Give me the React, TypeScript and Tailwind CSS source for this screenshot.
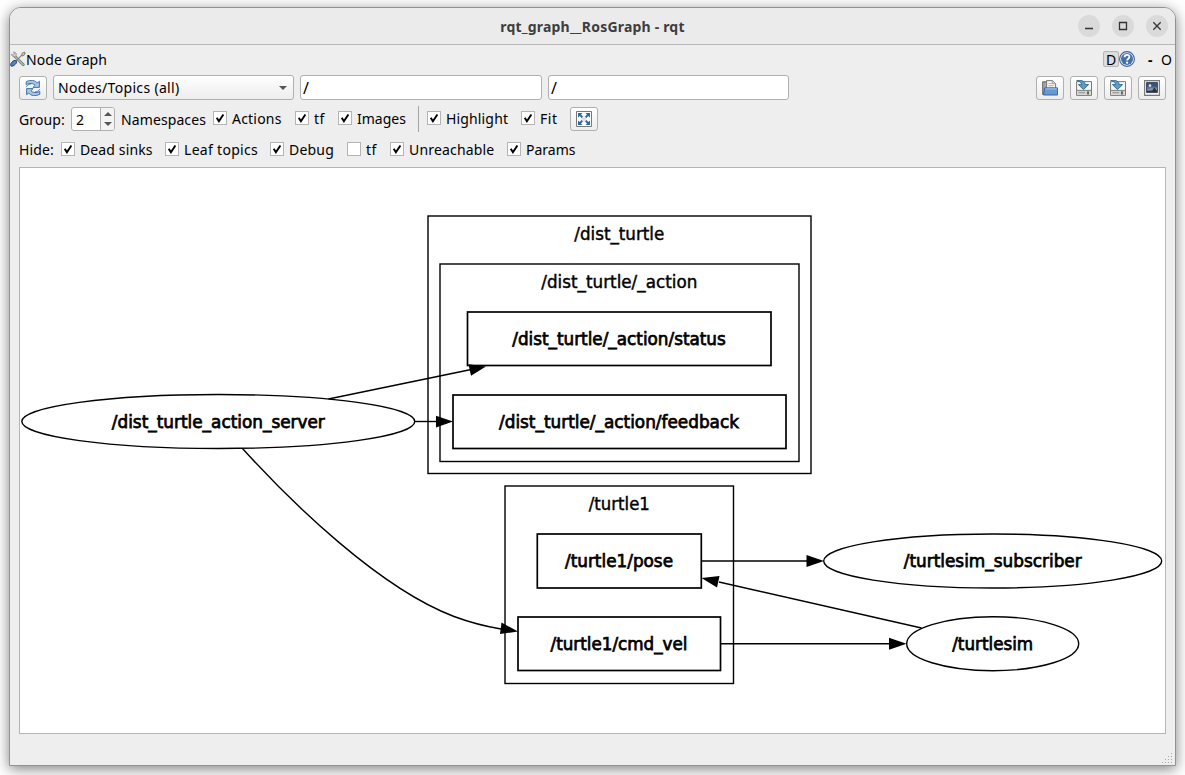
import type { ReactNode } from "react";
import clsx from "clsx";

type CheckOption = { label: string; width: string; text: string; checked?: boolean };

const NAMESPACE_OPTIONS: CheckOption[] = [
  { label: "Actions", width: "w-[82px]", text: "tracking-[0.2px]", checked: true },
  { label: "tf", width: "w-[43px]", text: "tracking-[0.5px]", checked: true },
  { label: "Images", width: "w-[80px]", text: "tracking-normal", checked: true },
];

const VIEW_OPTIONS: CheckOption[] = [
  { label: "Highlight", width: "w-[94px]", text: "tracking-[0.15px]", checked: true },
  { label: "Fit", width: "w-[49px]", text: "tracking-[0.5px]", checked: true },
];

const HIDE_OPTIONS: CheckOption[] = [
  { label: "Dead sinks", width: "w-[104px]", text: "tracking-[0.12px]", checked: true },
  { label: "Leaf topics", width: "w-[105px]", text: "tracking-[0.3px]", checked: true },
  { label: "Debug", width: "w-[77px]", text: "tracking-[0.2px]", checked: true },
  { label: "tf", width: "w-[43px]", text: "tracking-[0.5px]" },
  { label: "Unreachable", width: "w-[117px]", text: "tracking-[0.17px]", checked: true },
  { label: "Params", width: "w-[80px]", text: "tracking-normal", checked: true },
];

function Check({ label, width, text, checked }: CheckOption) {
  return (
    <label className={clsx("flex shrink-0 items-center gap-[5px] whitespace-nowrap", width)}>
      <span className="flex size-[14px] shrink-0 items-center justify-center border border-[#b4b4b4] bg-white">
        {checked && (
          <svg viewBox="0 0 12 12" className="size-3">
            <path d="M2.7 5.8 4.9 9.3 9.4 2.4" fill="none" stroke="#000" strokeWidth="1.9" />
          </svg>
        )}
      </span>
      <span className={text}>{label}</span>
    </label>
  );
}

function ToolButton({ children }: { children: ReactNode }) {
  return (
    <button className="flex h-6 w-7 shrink-0 items-center justify-center rounded-[3px] border border-[#b0b0b0] bg-linear-to-b from-white to-[#ededed]">
      {children}
    </button>
  );
}

function ToolsIcon() {
  return (
    <svg viewBox="0 0 16 16" className="h-4 w-4 shrink-0">
      <path d="M4.5 5 13.3 13.8" stroke="#777974" strokeWidth="2.8" strokeLinecap="round" />
      <path d="M4.5 5 13.3 13.8" stroke="#e3e4e1" strokeWidth="1" strokeLinecap="round" />
      <path d="M1.3 3.2 3.2 4.2 4.6 3 3.5 1.1C5.5.8 7 2.8 6 4.6 5 6.4 2 6 1.3 3.2Z" fill="#dedfdc" stroke="#858783" strokeWidth=".8" />
      <path d="M5.5 10.5 11.5 4.4 12.4 2.2 14.5 1.2 15 2.5 13.7 4.2 12 5" fill="none" stroke="#858783" strokeWidth="1.2" />
      <path d="M.7 13.2C1.5 11 3.5 9.2 5.2 9.5 7.3 10 6.8 12 5.3 13.3 3.5 15 1.7 15.8.9 14.8Z" fill="#5b82bb" stroke="#173e75" strokeWidth="1" />
    </svg>
  );
}

function RefreshIcon() {
  return (
    <svg viewBox="0 0 16 16" className="size-4">
      <path d="M1.2 4.6V1.8C5.5-.6 10.2.2 12.2 3L14.4 1.3V7.4H8L10 5.2C8 3 4.5 3 1.2 4.6Z" fill="#a9c5e6" stroke="#3465a4" strokeWidth=".9" strokeLinejoin="round" />
      <path d="M14.8 11.4V14.2C10.5 16.6 5.8 15.8 3.8 13L1.6 14.7V8.6H8L6 10.8C8 13 11.5 13 14.8 11.4Z" fill="#a9c5e6" stroke="#3465a4" strokeWidth=".9" strokeLinejoin="round" />
      <path d="M1.3 6.8C2.4 4.9 4 4.2 5.8 4.1M14.7 9.2C13.6 11.1 12 11.8 10.2 11.9" fill="none" stroke="#3465a4" strokeWidth=".9" />
    </svg>
  );
}

function OpenIcon() {
  return (
    <svg viewBox="0 0 16 16" className="size-4">
      <path d="M.7 14.5V1.8H7V14.5Z" fill="#a5a7a2" stroke="#61635f" />
      <path d="M4.6 9.5V.6H10.5L13.6 3.6V9.5Z" fill="#f6f6f5" stroke="#777974" />
      <path d="M6.5 3.5H10M6.5 5.5H11.5M6.5 7.3H11.5" stroke="#aaaba8" strokeWidth=".8" />
      <path d="M10.3.8V3.8H13.4" fill="#ddd" stroke="#888a85" strokeWidth=".7" />
      <path d="M2.7 7.9H15.6V15H1.6Z" fill="#6698d1" stroke="#3465a4" strokeLinejoin="round" />
      <path d="M3.4 8.9H14.8" stroke="#a9c9ed" />
    </svg>
  );
}

function SaveIcon() {
  return (
    <svg viewBox="0 0 16 16" className="size-4">
      <path d="M.6 1.6H15.5V15.4H.6Z" fill="#f6f6f5" stroke="#777974" />
      <path d="M1.3 10.5H14.8V14.8H1.3Z" fill="#d1d2cf" />
      <path d="M1 10.4H15" stroke="#777974" strokeWidth=".9" />
      <path d="M2.5 12.7H9" stroke="#92948f" />
      <path d="M12 11.3V14.5" stroke="#000" />
      <path d="M.7.4C5.7-.5 9.2 1.5 9.2 4.6H12.6L7.5 9.6 2.4 4.6H5.6C5.6 2.6 3.8 1.3.7.4Z" fill="#639cbf" stroke="#28668b" strokeWidth=".9" strokeLinejoin="round" />
    </svg>
  );
}

function ImageIcon() {
  return (
    <svg viewBox="0 0 16 16" className="size-4">
      <path d="M.6.6H15.4V15.4H.6Z" fill="#f3f3f2" stroke="#777974" strokeWidth="1.1" />
      <path d="M2.5 2.5H13.5V12.5H2.5Z" fill="#5b7396" stroke="#273750" strokeWidth=".8" />
      <path d="M3 3H13V6.5H3Z" fill="#38527a" />
      <path d="M3 9.5 7 8 10 8.6 13 8V10H3Z" fill="#8792a3" />
      <circle cx="6" cy="5.6" r="1.3" fill="#e3e7df" />
      <path d="M3 12V11L8 11 10.4 7.6 13 11V12Z" fill="#303332" />
    </svg>
  );
}

function FitIcon() {
  return (
    <svg viewBox="0 0 16 16" className="size-4">
      <path d="M.5.5H15.5V15.5H.5Z" fill="#fff" stroke="#777974" />
      <path d="M5.5 5.5H10.5V10.5H5.5Z" fill="#dfe3e8" />
      <path d="M2 2H6.5L5 3.6 7 5.6 5.6 7 3.6 5 2 6.5ZM14 2V6.5L12.4 5 10.4 7 9 5.6 11 3.6 9.5 2ZM2 14V9.5L3.6 11 5.6 9 7 10.4 5 12.4 6.5 14ZM14 14H9.5L11 12.4 9 10.4 10.4 9 12.4 11 14 9.5Z" fill="#3465a4" />
    </svg>
  );
}

function HelpIcon() {
  return (
    <svg viewBox="0 0 16 16" className="size-4 shrink-0">
      <circle cx="8" cy="8" r="7.4" fill="#f3f6fa" stroke="#3b5f98" strokeWidth="1.1" />
      <circle cx="8" cy="8" r="6" fill="#466fa9" />
      <path d="M5.6 6.2C5.5 3.3 10.5 3.1 10.4 6 10.3 7.8 8.2 7.7 8.1 9.5" fill="none" stroke="#fff" strokeWidth="1.7" />
      <circle cx="8.1" cy="11.7" r="1.1" fill="#fff" />
    </svg>
  );
}

const CLUSTERS = [
  { label: "/dist_turtle", x: 428, y: 216, w: 383, h: 257.5, tx: 619.3, ty: 240, len: 90 },
  { label: "/dist_turtle/_action", x: 440, y: 264, w: 359, h: 197.5, tx: 619.3, ty: 287.6, len: 156 },
  { label: "/turtle1", x: 505, y: 486, w: 228.5, h: 197.5, tx: 619.3, ty: 509.8, len: 61 },
];

const TOPICS = [
  { label: "/dist_turtle/_action/status", x: 467.5, y: 312, w: 303.5, h: 53.5, len: 213.5 },
  { label: "/dist_turtle/_action/feedback", x: 453, y: 395, w: 333, h: 53.5, len: 240 },
  { label: "/turtle1/pose", x: 537.3, y: 534, w: 164, h: 54, len: 108 },
  { label: "/turtle1/cmd_vel", x: 518, y: 617, w: 202.5, h: 53.5, len: 137 },
];

const NODES = [
  { label: "/dist_turtle_action_server", cx: 218.3, cy: 421.5, rx: 196.5, ry: 27, len: 213 },
  { label: "/turtlesim_subscriber", cx: 992.7, cy: 561, rx: 169, ry: 27, len: 178 },
  { label: "/turtlesim", cx: 992.7, cy: 643.7, rx: 86, ry: 27, len: 81 },
];

const EDGES = [
  { line: "M328.5 399 470 369.8", head: "468.5,364.2 486,366.5 471,375.7" },
  { line: "M415 421.5H436", head: "436,415.7 453,421.5 436,427.5" },
  { line: "M242.5 448.5C291 502 379 588 454 616.5Q477 625 501 629", head: "501.5,622.5 518,631.5 500,634" },
  { line: "M701.5 561H807", head: "806.5,555 824,561 806.5,567" },
  { line: "M721 643.7H890", head: "889,637.7 906.5,643.7 889,649.7" },
  { line: "M921.5 628 719 582", head: "719.5,576 701.5,578 717,587.5" },
];

function GraphLabel({ x, y, len, bold, children }: { x: number; y: number; len: number; bold?: boolean; children: string }) {
  return (
    <text
      x={x}
      y={y}
      textAnchor="middle"
      textLength={len}
      lengthAdjust="spacingAndGlyphs"
      strokeWidth={bold ? 0.75 : 0.45}
      stroke="#000"
      className="font-['DejaVu_Sans',sans-serif] text-[17.6px]"
    >
      {children}
    </text>
  );
}

function RosGraph() {
  return (
    <svg viewBox="20 168 1145 565" className="block h-full w-full">
      <g fill="none" stroke="#000" strokeWidth="1.4">
        {CLUSTERS.map((c) => (
          <rect key={c.label} x={c.x} y={c.y} width={c.w} height={c.h} />
        ))}
        {EDGES.map((e) => (
          <path key={e.head} d={e.line} />
        ))}
        {NODES.map((n) => (
          <ellipse key={n.label} cx={n.cx} cy={n.cy} rx={n.rx} ry={n.ry} />
        ))}
      </g>
      <g fill="none" stroke="#000" strokeWidth="1.7">
        {TOPICS.map((t) => (
          <rect key={t.label} x={t.x} y={t.y} width={t.w} height={t.h} />
        ))}
      </g>
      {EDGES.map((e) => (
        <polygon key={e.head} points={e.head} />
      ))}
      {CLUSTERS.map((c) => (
        <GraphLabel key={c.label} x={c.tx} y={c.ty} len={c.len}>{c.label}</GraphLabel>
      ))}
      {TOPICS.map((t) => (
        <GraphLabel key={t.label} x={619} y={t.y + 33} len={t.len} bold>{t.label}</GraphLabel>
      ))}
      {NODES.map((n) => (
        <GraphLabel key={n.label} x={n.cx} y={n.cy + 6.4} len={n.len} bold>{n.label}</GraphLabel>
      ))}
    </svg>
  );
}

function TitleBar() {
  return (
    <header className="grid h-[37px] shrink-0 grid-cols-[1fr_auto_1fr] items-center border-b border-[#b7b7b7] bg-[#ebebeb]">
      <span />
      <h1 className="pt-px text-[14px] font-bold tracking-[0.2px] text-[#3d3d3d]">rqt_graph__RosGraph - rqt</h1>
      <div className="flex justify-end gap-3 pr-[7px] text-[#333]">
        {["M7 13.5H15", "M7.5 7.5H14.5V14.5H7.5Z", "M7.3 7.3 14.7 14.7M14.7 7.3 7.3 14.7"].map((d) => (
          <button key={d} className="size-[22px] rounded-full bg-[#dadada]">
            <svg viewBox="0 0 22 22" className="size-[22px]">
              <path d={d} fill="none" stroke="currentColor" strokeWidth="1.3" />
            </svg>
          </button>
        ))}
      </div>
    </header>
  );
}

export default function App() {
  return (
    <div className="h-[775px] w-[1185px] overflow-hidden bg-white pt-[7px] pl-[9px] font-['Noto_Sans',sans-serif] text-[14px] text-black">
      <div className="flex h-[759px] w-[1167px] flex-col overflow-hidden rounded-t-[12px] border border-[#929292] bg-[#eeeeee] shadow-[0_3px_14px_rgba(0,0,0,0.5)]">
        <TitleBar />

        {/* Dock widget title */}
        <div className="flex h-[28px] shrink-0 items-center">
          <ToolsIcon />
          <span className="tracking-[0.1px]">Node Graph</span>
          <div className="ml-auto flex items-center pr-[3px]">
            <span className="flex h-4 w-4 items-center justify-center rounded-[2px] border border-[#b5b5b5] bg-[#dcdcdc]">D</span>
            <HelpIcon />
            <span className="ml-[13px] w-[6px] font-bold">-</span>
            <span className="ml-[7px]">O</span>
          </div>
        </div>

        {/* Graph selection and filters */}
        <div className="flex h-[29px] shrink-0 items-center pr-[9px] pl-[9px]">
          <ToolButton><RefreshIcon /></ToolButton>
          <div className="ml-[6px] flex h-[25px] w-[241px] items-center justify-between rounded-[3px] border border-[#b0b0b0] bg-linear-to-b from-white to-[#ededed] pr-[6px] pl-[4px] tracking-[0.33px]">
            Nodes/Topics (all)
            <svg viewBox="0 0 8 4" className="h-1 w-2"><path d="M0 0H8L4 4Z" fill="#555" /></svg>
          </div>
          <div className="ml-[6px] flex h-[25px] w-[242px] items-center rounded-[3px] border border-[#b0b0b0] bg-white pl-[2px] text-[16px]">/</div>
          <div className="ml-[6px] flex h-[25px] w-[241px] items-center rounded-[3px] border border-[#b0b0b0] bg-white pl-[2px] text-[16px]">/</div>
          <div className="ml-auto flex gap-[6px]">
            <ToolButton><OpenIcon /></ToolButton>
            <ToolButton><SaveIcon /></ToolButton>
            <ToolButton><SaveIcon /></ToolButton>
            <ToolButton><ImageIcon /></ToolButton>
          </div>
        </div>

        <div className="flex h-[34px] shrink-0 items-center pl-[9px]">
          <span className="w-[52px] tracking-[0.1px]">Group:</span>
          <div className="flex h-6 w-11 overflow-hidden rounded-[3px] border border-[#b0b0b0] bg-white">
            <span className="flex flex-1 items-center pl-1">2</span>
            <span className="flex w-[14px] flex-col items-center justify-center gap-[6px] border-l border-[#b0b0b0] bg-[#f3f3f3]">
              <svg viewBox="0 0 8 4" className="h-1 w-2"><path d="M0 4H8L4 0Z" fill="#555" /></svg>
              <svg viewBox="0 0 8 4" className="h-1 w-2"><path d="M0 0H8L4 4Z" fill="#555" /></svg>
            </span>
          </div>
          <span className="ml-[6px] w-[92px] tracking-[0.1px]">Namespaces</span>
          <div className="flex items-center pb-[2px]">
            {NAMESPACE_OPTIONS.map((o) => <Check key={o.label} {...o} />)}
          </div>
          <span className="mr-2 h-[26px] w-px shrink-0 bg-[#a4a4a4]" />
          <div className="flex items-center pb-[2px]">
            {VIEW_OPTIONS.map((o) => <Check key={o.label} {...o} />)}
          </div>
          <ToolButton><FitIcon /></ToolButton>
        </div>

        <div className="flex h-[31px] shrink-0 items-center pb-[5px] pl-[9px]">
          <span className="w-[42px] tracking-[0.1px]">Hide:</span>
          {HIDE_OPTIONS.map((o) => <Check key={o.label} {...o} />)}
        </div>

        <main className="mx-[9px] h-[567px] w-[1147px] shrink-0 border border-[#b5b5b5] bg-white">
          <RosGraph />
        </main>

        {/* Status bar with the resize grip */}
        <footer className="flex flex-1 items-end justify-end pr-[2px] pb-px">
          <svg viewBox="0 0 11 11" className="size-[11px]">
            <path d="M9 0h1v1h-1zM6 3h1v1h-1zM9 3h1v1h-1zM3 6h1v1h-1zM6 6h1v1h-1zM9 6h1v1h-1zM0 9h1v1h-1zM3 9h1v1h-1zM6 9h1v1h-1zM9 9h1v1h-1z" fill="#aaa" />
          </svg>
        </footer>
      </div>
    </div>
  );
}
